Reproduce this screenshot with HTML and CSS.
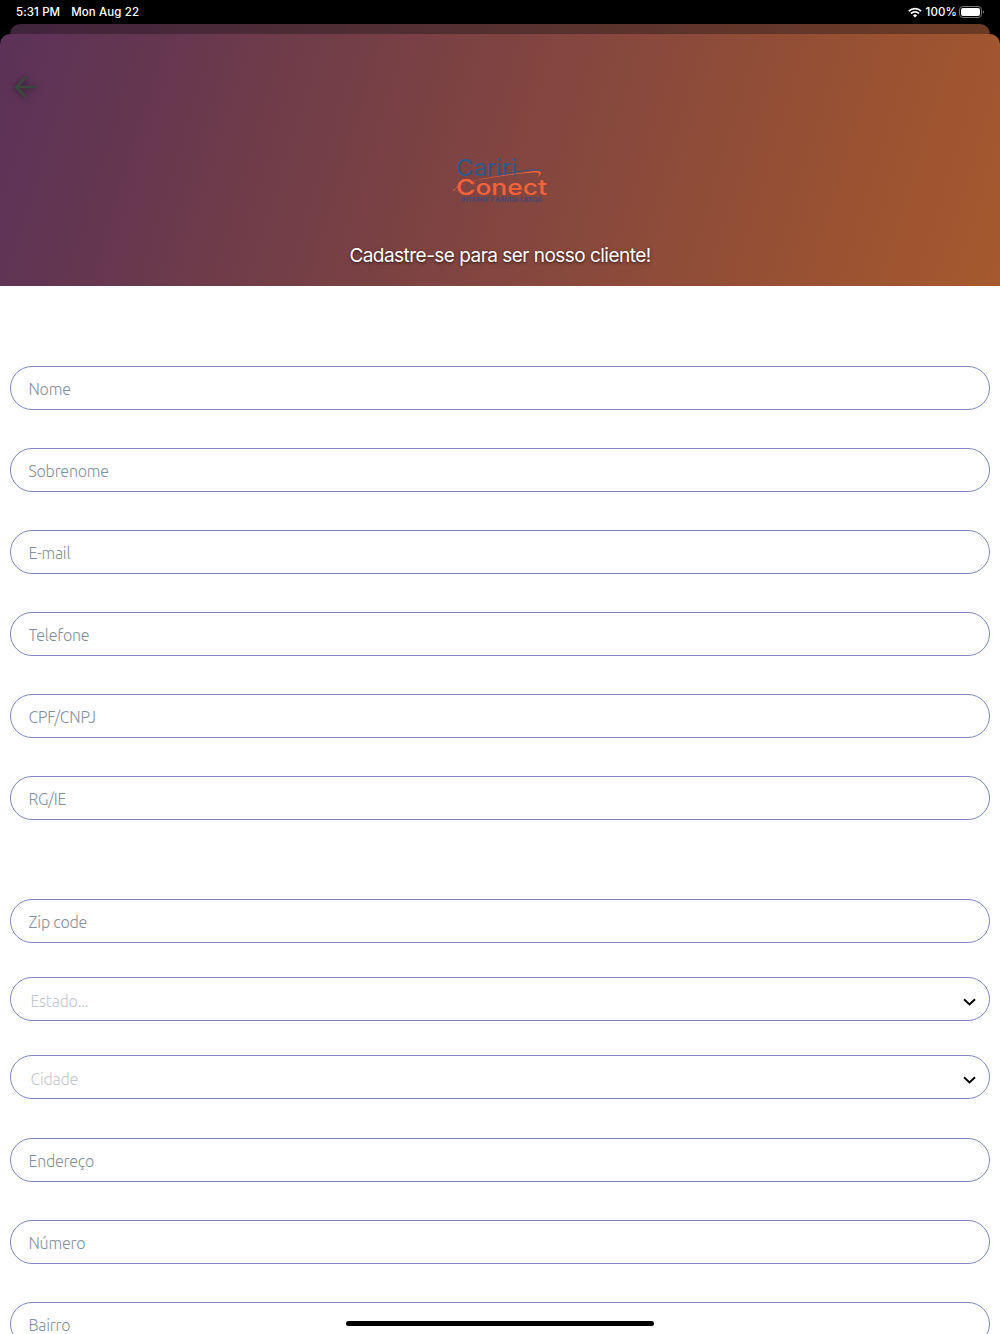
FILE: index.html
```
<!DOCTYPE html>
<html lang="pt-BR">
<head>
    <meta charset="UTF-8">
    <meta name="viewport" content="width=device-width, initial-scale=1.0">
    <title>Cariri Conect - Cadastro</title>
    <link rel="stylesheet" href="styles.css">
</head>
<body>
    <div class="status-bar">
        <span class="time">5:31 PM</span>
        <span class="date">Mon Aug 22</span>
        <svg class="wifi" width="14" height="11" viewBox="0 0 14 11" fill="none" stroke="#fff" stroke-width="1.9">
            <path d="M.8 4.1a9 9 0 0 1 12.4 0"/>
            <path d="M3 6.5a5.8 5.8 0 0 1 8 0"/>
            <path d="M7 10.6 4.9 8.4a3 3 0 0 1 4.2 0z" fill="#fff" stroke="none"/>
        </svg>
        <span class="percent">100%</span>
        <svg class="battery" width="26" height="12" viewBox="0 0 26 12">
            <rect x=".5" y=".5" width="22" height="11" rx="3.3" fill="none" stroke="#777"/>
            <rect x="2" y="2" width="19" height="8" rx="2" fill="#fff"/>
            <path d="M24 4.2v3.6a2 2 0 0 0 0-3.6z" fill="#777"/>
        </svg>
    </div>

    <div class="back-sheet"></div>

    <main class="sheet">
        <header>
            <button type="button" class="back" aria-label="Voltar">
                <svg width="22" height="22" viewBox="0 0 22 22" fill="none" stroke="#3a4840" stroke-width="2.5" stroke-linecap="round" stroke-linejoin="round">
                    <path d="M20.500 11H2M11.500 1.500 2 11l9.500 9.500"/>
                </svg>
            </button>
            <svg class="logo" width="100" height="50" viewBox="0 0 100 50">
                <text class="logo-cariri" x="6" y="21.500" textLength="61" lengthAdjust="spacingAndGlyphs">Cariri</text>
                <text class="logo-conect" x="6" y="40.500" textLength="91" lengthAdjust="spacingAndGlyphs">Conect</text>
                <text class="logo-tag" x="11" y="47.500" textLength="81" lengthAdjust="spacingAndGlyphs">INTERNET BANDA LARGA</text>
                <path d="M49 21C66 17.500 86 14.500 91 16.500" fill="none" stroke="#2c5a8c" stroke-width=".9"/>
                <path d="M8 32C-1 39 4 38 5 35 17 25 57 21 80 17.500 92 16 94 18 87 24 91 19 90 18 80 18.800 50 21.500 22 26 8 32z" fill="#f4633a"/>
            </svg>
            <h1>Cadastre-se para ser nosso cliente!</h1>
        </header>

        <form>
            <section class="personal">
                <input type="text" name="nome" placeholder="Nome">
                <input type="text" name="sobrenome" placeholder="Sobrenome">
                <input type="email" name="email" placeholder="E-mail">
                <input type="tel" name="telefone" placeholder="Telefone">
                <input type="text" name="documento" placeholder="CPF/CNPJ">
                <input type="text" name="rg" placeholder="RG/IE">
            </section>

            <section class="region">
                <input type="text" name="zip" placeholder="Zip code">
                <div class="select">
                    <span>Estado...</span>
                    <svg width="13" height="8" viewBox="0 0 13 8" fill="none" stroke="#000" stroke-width="1.9"><path d="M1 1.200l5.500 5.300L12 1.200"/></svg>
                </div>
                <div class="select">
                    <span>Cidade</span>
                    <svg width="13" height="8" viewBox="0 0 13 8" fill="none" stroke="#000" stroke-width="1.9"><path d="M1 1.200l5.500 5.300L12 1.200"/></svg>
                </div>
            </section>

            <section class="address">
                <input type="text" name="endereco" placeholder="Endereço">
                <input type="text" name="numero" placeholder="Número">
                <input type="text" name="bairro" placeholder="Bairro">
            </section>
        </form>
    </main>

    <div class="home-indicator"></div>
</body>
</html>
```
FILE: styles.css
```
* {
    box-sizing: border-box;
}

body {
    margin: 0;
    height: 1334px;
    overflow: hidden;
    background-color: #000;
    font-family: Inter, sans-serif;
}

/* iPad status bar */
.status-bar {
    display: flex;
    align-items: center;
    height: 24px;
    padding: 0 15px 0 16px;
    color: #fff;
    font-size: 11.5px;
    font-weight: 500;
    letter-spacing: 0.1px;
}

.date {
    margin-left: 11px;
}

.wifi {
    margin-left: auto;
}

.percent {
    margin: 0 2px 0 4px;
}

/* Sheets */
.back-sheet {
    height: 10px;
    margin: 0 10px;
    border-radius: 10px 10px 0 0;
    background: linear-gradient(90deg, #40243d, #55302f 50%, #6c3b25);
}

.sheet {
    height: 1300px;
}

header {
    display: flex;
    flex-direction: column;
    align-items: center;
    height: 252px;
    padding-top: 42px;
    border-radius: 10px 10px 0 0;
    background: linear-gradient(107deg, #5c3259 0%, #643650 14%, #733e47 32%, #84463f 54%, #965033 79%, #a6592d 100%);
}

.back {
    align-self: flex-start;
    height: 22px;
    margin-left: 14px;
    padding: 0;
    border: none;
    background: none;
}

.back svg {
    display: block;
    filter: drop-shadow(0 1px 3px rgba(0, 0, 0, 0.5));
}

.logo {
    display: block;
    margin-top: 56px;
}

.logo text {
    font-family: Inter, sans-serif;
}

.logo-cariri {
    font-size: 23px;
    fill: #2c5a8c;
}

.logo-conect {
    font-size: 22px;
    font-weight: 500;
    fill: #f4633a;
}

.logo-tag {
    font-size: 5.6px;
    font-weight: 600;
    fill: #3e4a78;
}

h1 {
    margin: 39px 0 0;
    color: #fff;
    font-size: 19px;
    font-weight: 400;
    line-height: 26px;
    letter-spacing: -0.53px;
    text-shadow: 0 1px 3px rgba(0, 0, 0, 0.65);
}

/* Form */
form {
    height: 1048px;
    padding: 80px 10px 0;
    overflow: hidden;
    background-color: #fff;
}

section {
    display: flex;
    flex-direction: column;
}

.personal, .address {
    gap: 38px;
}

.region {
    gap: 34px;
    margin: 79px 0 39px;
}

input, .select {
    width: 100%;
    height: 44px;
    flex: none;
    border: 1px solid #8087ba;
    border-radius: 22px;
    background-color: #fff;
    font-family: Ubuntu, "Open Sans", sans-serif;
    font-size: 16px;
    font-weight: 300;
    letter-spacing: -0.22px;
}

input {
    padding: 1px 17px 0 17.5px;
}

input::placeholder {
    color: #84919c;
    opacity: 1;
}

.select {
    display: flex;
    align-items: center;
    justify-content: space-between;
    padding: 3px 13px 0 19.5px;
    color: #c5c7cb;
}

.select svg {
    position: relative;
    top: 1px;
}

.home-indicator {
    position: fixed;
    bottom: 8px;
    left: 346px;
    width: 308px;
    height: 5px;
    border-radius: 3px;
    background-color: #000;
}
```
